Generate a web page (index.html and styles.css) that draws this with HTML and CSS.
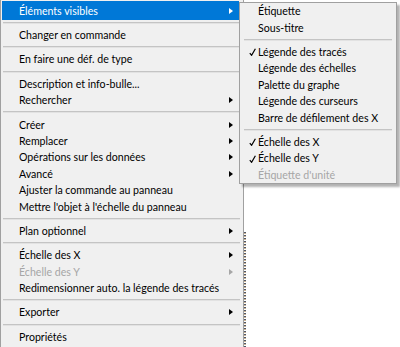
FILE: index.html
```html
<!DOCTYPE html>
<html lang="fr">

<head>
  <meta charset="UTF-8">
  <title>Menu contextuel</title>
  <link rel="stylesheet" href="styles.css">
</head>

<body>

  <div class="ecran">
    <div class="menu menu-principal">
      <div class="item actif premier"><span>Éléments visibles</span><span class="fleche"></span></div>
      <div class="sep sep-haut"></div>
      <div class="item"><span>Changer en commande</span></div>
      <div class="sep"></div>
      <div class="item"><span>En faire une déf. de type</span></div>
      <div class="sep"></div>
      <div class="item"><span>Description et info-bulle...</span></div>
      <div class="item"><span>Rechercher</span><span class="fleche"></span></div>
      <div class="sep"></div>
      <div class="item"><span>Créer</span><span class="fleche"></span></div>
      <div class="item"><span>Remplacer</span><span class="fleche"></span></div>
      <div class="item"><span>Opérations sur les données</span><span class="fleche"></span></div>
      <div class="item"><span>Avancé</span><span class="fleche"></span></div>
      <div class="item"><span>Ajuster la commande au panneau</span></div>
      <div class="item"><span>Mettre l'objet à l'échelle du panneau</span></div>
      <div class="sep"></div>
      <div class="item"><span>Plan optionnel</span><span class="fleche"></span></div>
      <div class="sep"></div>
      <div class="item"><span>Échelle des X</span><span class="fleche"></span></div>
      <div class="item inactif"><span>Échelle des Y</span><span class="fleche"></span></div>
      <div class="item"><span>Redimensionner auto. la légende des tracés</span></div>
      <div class="sep"></div>
      <div class="item"><span>Exporter</span><span class="fleche"></span></div>
      <div class="sep"></div>
      <div class="item"><span>Propriétés</span></div>
    </div>

    <div class="bord-selection"></div>

    <div class="menu sous-menu">
      <div class="item"><span class="coche"></span><span>Étiquette</span></div>
      <div class="item"><span class="coche"></span><span>Sous-titre</span></div>
      <div class="sep"></div>
      <div class="item"><span class="coche"><svg width="7" height="8" viewBox="0 0 7 8"><path d="M0.8 5.2 L2.6 7.3 L6.4 0.8" fill="none" stroke="#000" stroke-width="1.2"/></svg></span><span>Légende des tracés</span></div>
      <div class="item"><span class="coche"></span><span>Légende des échelles</span></div>
      <div class="item"><span class="coche"></span><span>Palette du graphe</span></div>
      <div class="item"><span class="coche"></span><span>Légende des curseurs</span></div>
      <div class="item"><span class="coche"></span><span>Barre de défilement des X</span></div>
      <div class="sep"></div>
      <div class="item"><span class="coche"><svg width="7" height="8" viewBox="0 0 7 8"><path d="M0.8 5.2 L2.6 7.3 L6.4 0.8" fill="none" stroke="#000" stroke-width="1.2"/></svg></span><span>Échelle des X</span></div>
      <div class="item"><span class="coche"><svg width="7" height="8" viewBox="0 0 7 8"><path d="M0.8 5.2 L2.6 7.3 L6.4 0.8" fill="none" stroke="#000" stroke-width="1.2"/></svg></span><span>Échelle des Y</span></div>
      <div class="item inactif"><span class="coche"></span><span>Étiquette d'unité</span></div>
    </div>
  </div>

</body>

</html>
```

FILE: styles.css
```css
body {
  margin: 0;
  background: #ffffff;
  font-family: Lato, "Liberation Sans", sans-serif;
  font-size: 10.6px;
  color: #000000;
}

.ecran {
  position: relative;
  display: flex;
  width: 400px;
  height: 347px;
  overflow: hidden;
}

.menu {
  background: #f0f0f0;
  box-sizing: border-box;
}

.menu-principal {
  width: 244px;
  height: 347px;
  border-left: 1px solid #a0a0a0;
  border-right: 1px solid #a0a0a0;
  padding-top: 1px;
}

.item {
  display: flex;
  align-items: center;
  height: 16.4px;
  margin: 0 4px 0 1px;
  padding-left: 17px;
  white-space: nowrap;
}

.item.premier {
  height: 19px;
}

.item.actif {
  background: #0078d7;
  color: #ffffff;
}

.item.inactif {
  color: #a6a6a6;
}

.fleche {
  margin-left: auto;
  margin-right: 6px;
  width: 0;
  height: 0;
  border-top: 3.5px solid transparent;
  border-bottom: 3.5px solid transparent;
  border-left: 4px solid #000000;
}

.actif .fleche {
  border-left-color: #ffffff;
}

.inactif .fleche {
  border-left-color: #a6a6a6;
}

.sep {
  height: 8px;
  display: flex;
  align-items: center;
  margin: 0 3px 0 2px;
}

.sep::before {
  content: "";
  flex: 1;
  height: 1px;
  background: #c4c4c4;
  border-bottom: 1px solid #e2e2e2;
}

.sep-haut {
  height: 6.8px;
}

.bord-selection {
  width: 2px;
  margin-top: 232px;
  height: 115px;
  background: repeating-linear-gradient(180deg, #505868 0 1px, #c8b090 1px 2px, #ffffff 2px 3px);
}

.sous-menu {
  position: absolute;
  left: 239px;
  top: 2px;
  width: 158px;
  border: 1px solid #a0a0a0;
  box-shadow: 3px 3px 2px rgba(0, 0, 0, 0.3);
}

.sous-menu .item {
  margin: 0;
  padding-left: 8px;
}

.sous-menu .sep {
  margin: 0 4px;
}

.coche {
  flex: none;
  display: flex;
  align-items: center;
  width: 9px;
  height: 8px;
  padding-left: 1px;
  margin-top: 1px;
}
```
